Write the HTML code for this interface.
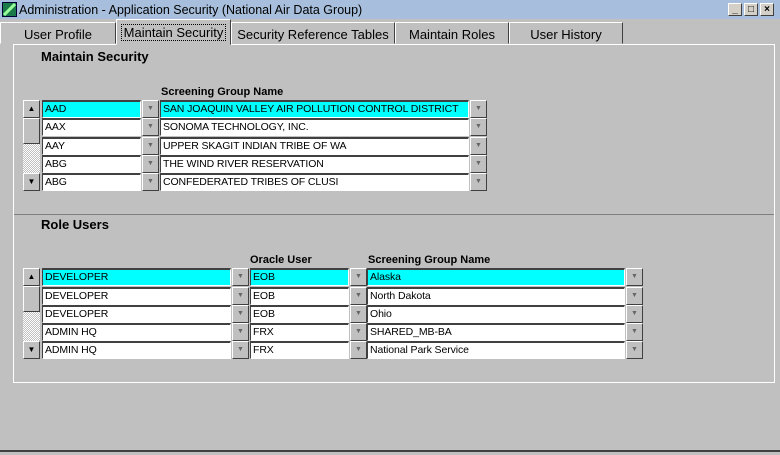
<!DOCTYPE html>
<html><head><style>
*{box-sizing:border-box;margin:0;padding:0}
body{width:780px;height:455px;background:#c0c0c0;font-family:"Liberation Sans",Arial,sans-serif;position:relative;overflow:hidden}
.a{position:absolute}
.title{left:0;top:0;width:780px;height:19px;background:#a7bfdc;font-size:12.5px;line-height:20px;padding-left:19px;color:#000}
.wb{top:3px;width:14px;height:13px;background:#d4d0c8;border:1px solid;border-color:#fff #404040 #404040 #fff;font-size:10px;line-height:11px;text-align:center;font-weight:bold}
.tab{top:22px;height:22px;border:1px solid;border-color:#fff #404040 transparent #fff;font-size:13px;text-align:center;line-height:24px;background:#c0c0c0}
.f{height:18px;background:#fff;border:1px solid;border-color:#404040 #fff #fff #404040;border-top:2px solid #404040;font-size:10.5px;letter-spacing:-0.1px;line-height:15px;padding-left:2px;white-space:nowrap;overflow:hidden}
.c{background:#00ffff}
.btn{width:17px;height:18px;background:#c0c0c0;border:1px solid;border-color:#fff #404040 #404040 #fff;font-size:7px;color:#666;text-align:center;line-height:16px}
.lbl{font-size:11px;font-weight:bold}
.h{font-size:13px;font-weight:bold}
.sb{width:17px;height:18px;background:#c0c0c0;border:1px solid;border-color:#fff #404040 #404040 #fff;font-size:8px;text-align:center;line-height:16px}
</style></head><body>
<div class="a title">Administration - Application Security (National Air Data Group)</div>
<div class="a" style="left:2px;top:2px;width:15px;height:15px;background:#1b7a4a;border:1px solid #003"><svg width="13" height="13"><path d="M1 12 L12 1" stroke="#9f9" stroke-width="3"/></svg></div>
<div class="a wb" style="left:728px">_</div><div class="a wb" style="left:744px">□</div><div class="a wb" style="left:760px">×</div>

<div class="a tab" style="left:0;width:116px">User Profile</div>
<div class="a tab" style="left:116px;top:19px;height:26px;width:115px;z-index:2;line-height:26px"><span style="border:1px dotted #000;padding:0 2px">Maintain Security</span></div>
<div class="a tab" style="left:231px;width:164px">Security Reference Tables</div>
<div class="a tab" style="left:395px;width:114px">Maintain Roles</div>
<div class="a tab" style="left:509px;width:114px">User History</div>

<div class="a" style="left:13px;top:44px;width:762px;height:339px;border:1px solid #fff"></div>
<div class="a" style="left:14px;top:214px;width:760px;height:1px;background:#808080"></div>
<div class="a" style="left:0;top:450px;width:780px;height:2px;background:#404040"></div>

<div class="a h" style="left:41px;top:49px">Maintain Security</div>
<div class="a lbl" style="left:161px;top:86px">Screening Group Name</div>

<div class="a sb" style="left:23px;top:100px">▲</div>
<div class="a" style="left:23px;top:118px;width:17px;height:26px;background:#c0c0c0;border:1px solid;border-color:#fff #404040 #404040 #fff"></div>
<div class="a" style="left:23px;top:144px;width:17px;height:29px;background:repeating-conic-gradient(#fff 0 25%,#c0c0c0 0 50%) 0 0/2px 2px"></div>
<div class="a sb" style="left:23px;top:173px">▼</div>

<div class="a f c" style="left:42px;top:100px;width:99px">AAD</div><div class="a btn c" style="left:142px;top:100px">▼</div>
<div class="a f c" style="left:160px;top:100px;width:309px">SAN JOAQUIN VALLEY AIR POLLUTION CONTROL DISTRICT</div><div class="a btn c" style="left:470px;top:100px">▼</div>
<div class="a f" style="left:42px;top:118px;width:99px">AAX</div><div class="a btn" style="left:142px;top:118px">▼</div>
<div class="a f" style="left:160px;top:118px;width:309px">SONOMA TECHNOLOGY, INC.</div><div class="a btn" style="left:470px;top:118px">▼</div>
<div class="a f" style="left:42px;top:137px;width:99px">AAY</div><div class="a btn" style="left:142px;top:137px">▼</div>
<div class="a f" style="left:160px;top:137px;width:309px">UPPER SKAGIT INDIAN TRIBE OF WA</div><div class="a btn" style="left:470px;top:137px">▼</div>
<div class="a f" style="left:42px;top:155px;width:99px">ABG</div><div class="a btn" style="left:142px;top:155px">▼</div>
<div class="a f" style="left:160px;top:155px;width:309px">THE WIND RIVER RESERVATION</div><div class="a btn" style="left:470px;top:155px">▼</div>
<div class="a f" style="left:42px;top:173px;width:99px">ABG</div><div class="a btn" style="left:142px;top:173px">▼</div>
<div class="a f" style="left:160px;top:173px;width:309px">CONFEDERATED TRIBES OF CLUSI</div><div class="a btn" style="left:470px;top:173px">▼</div>

<div class="a h" style="left:41px;top:217px">Role Users</div>
<div class="a lbl" style="left:250px;top:254px">Oracle User</div>
<div class="a lbl" style="left:368px;top:254px">Screening Group Name</div>

<div class="a sb" style="left:23px;top:268px">▲</div>
<div class="a" style="left:23px;top:286px;width:17px;height:26px;background:#c0c0c0;border:1px solid;border-color:#fff #404040 #404040 #fff"></div>
<div class="a" style="left:23px;top:312px;width:17px;height:29px;background:repeating-conic-gradient(#fff 0 25%,#c0c0c0 0 50%) 0 0/2px 2px"></div>
<div class="a sb" style="left:23px;top:341px">▼</div>

<div class="a f c" style="left:42px;top:268px;width:189px">DEVELOPER</div><div class="a btn c" style="left:232px;top:268px">▼</div>
<div class="a f c" style="left:250px;top:268px;width:99px">EOB</div><div class="a btn c" style="left:350px;top:268px">▼</div>
<div class="a f c" style="left:367px;top:268px;width:258px">Alaska</div><div class="a btn c" style="left:626px;top:268px">▼</div>

<div class="a f" style="left:42px;top:287px;width:189px">DEVELOPER</div><div class="a btn" style="left:232px;top:287px">▼</div>
<div class="a f" style="left:250px;top:287px;width:99px">EOB</div><div class="a btn" style="left:350px;top:287px">▼</div>
<div class="a f" style="left:367px;top:287px;width:258px">North Dakota</div><div class="a btn" style="left:626px;top:287px">▼</div>

<div class="a f" style="left:42px;top:305px;width:189px">DEVELOPER</div><div class="a btn" style="left:232px;top:305px">▼</div>
<div class="a f" style="left:250px;top:305px;width:99px">EOB</div><div class="a btn" style="left:350px;top:305px">▼</div>
<div class="a f" style="left:367px;top:305px;width:258px">Ohio</div><div class="a btn" style="left:626px;top:305px">▼</div>

<div class="a f" style="left:42px;top:323px;width:189px">ADMIN HQ</div><div class="a btn" style="left:232px;top:323px">▼</div>
<div class="a f" style="left:250px;top:323px;width:99px">FRX</div><div class="a btn" style="left:350px;top:323px">▼</div>
<div class="a f" style="left:367px;top:323px;width:258px">SHARED_MB-BA</div><div class="a btn" style="left:626px;top:323px">▼</div>

<div class="a f" style="left:42px;top:341px;width:189px">ADMIN HQ</div><div class="a btn" style="left:232px;top:341px">▼</div>
<div class="a f" style="left:250px;top:341px;width:99px">FRX</div><div class="a btn" style="left:350px;top:341px">▼</div>
<div class="a f" style="left:367px;top:341px;width:258px">National Park Service</div><div class="a btn" style="left:626px;top:341px">▼</div>
</body></html>
